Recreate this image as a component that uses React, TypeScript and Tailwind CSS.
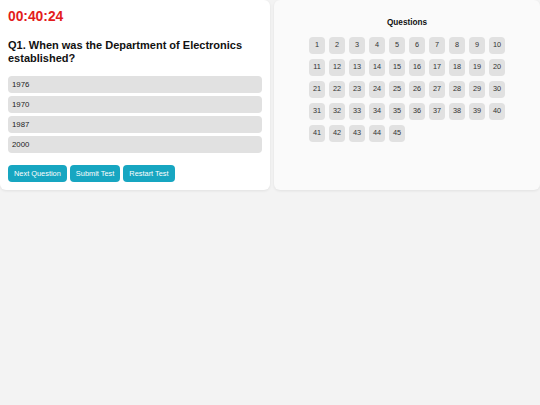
import React, { useState } from "react";

const options = ["1976", "1970", "1987", "2000"];
const numbers = Array.from({ length: 45 }, (_, i) => i + 1);

export default function App() {
  const [selected, setSelected] = useState<number | null>(null);

  return (
    <div className="min-h-screen bg-[#f3f3f3] font-['Liberation_Sans',Arial,sans-serif]">
      <div className="flex items-stretch gap-1">
        {/* question panel */}
        <div className="w-[270px] bg-white rounded-b-md rounded-tr-md shadow-[0_1px_3px_rgba(0,0,0,0.08)] px-2 pt-[8px] pb-2">
          <div className="text-[13.8px] leading-[18px] font-bold text-[#e31c1c]">00:40:24</div>
          <h2 className="mt-[13px] text-[11px] leading-[13px] font-bold text-[#111]">
            Q1. When was the Department of Electronics established?
          </h2>
          <div className="mt-[11px] flex flex-col gap-[3px]">
            {options.map((o, i) => (
              <button
                key={o}
                onClick={() => setSelected(i)}
                className={`h-[17px] w-full rounded-sm px-[4px] text-left text-[7.8px] text-[#222] ${
                  selected === i ? "bg-[#cfcfcf]" : "bg-[#e1e1e1]"
                }`}
              >
                {o}
              </button>
            ))}
          </div>
          <div className="mt-[12px] flex gap-[3px]">
            <button className="h-[17px] rounded-sm bg-[#17a6c1] px-[6px] text-[7.4px] text-white">Next Question</button>
            <button className="h-[17px] rounded-sm bg-[#17a6c1] px-[6px] text-[7.4px] text-white">Submit Test</button>
            <button className="h-[17px] rounded-sm bg-[#17a6c1] px-[6px] text-[7.4px] text-white">Restart Test</button>
          </div>
        </div>

        {/* navigator panel */}
        <div className="flex-1 bg-[#fafafa] rounded-md shadow-[0_1px_3px_rgba(0,0,0,0.08)] pt-[17px]">
          <div className="text-center text-[8.2px] leading-[12px] font-bold text-[#111]">Questions</div>
          <div className="mx-auto mt-[8px] grid w-fit grid-cols-10 gap-x-1 gap-y-[5px]">
            {numbers.map((n) => (
              <button
                key={n}
                className="flex h-[17px] w-4 items-center justify-center rounded-sm bg-[#e1e1e1] text-[7.3px] text-[#333]"
              >
                {n}
              </button>
            ))}
          </div>
        </div>
      </div>
    </div>
  );
}
